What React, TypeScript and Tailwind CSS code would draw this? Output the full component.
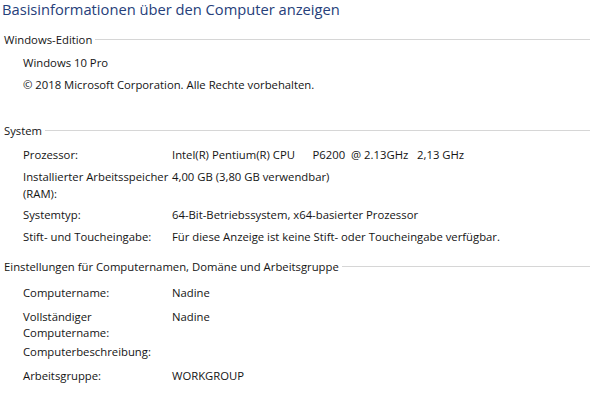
import React from "react";

const font = { fontFamily: '"Open Sans", "Noto Sans", sans-serif' };

function Section({ title, children }: { title: string; children: React.ReactNode }) {
  return (
    <div>
      <div className="flex items-center gap-[3px] pl-[4px]">
        <span className="whitespace-nowrap">{title}</span>
        <div className="h-px flex-1 bg-[#d6d6d6]" />
      </div>
      {children}
    </div>
  );
}

function Row({
  label,
  value,
  className = "",
}: {
  label: React.ReactNode;
  value?: React.ReactNode;
  className?: string;
}) {
  return (
    <div className={`grid grid-cols-[149px_1fr] pl-[23px] ${className}`}>
      <div>{label}</div>
      <div className="whitespace-pre">{value}</div>
    </div>
  );
}

export default function App() {
  return (
    <div
      className="h-[394px] w-[590px] overflow-hidden bg-white text-[11.3px] leading-[17px] text-[#141414]"
      style={font}
    >
      <h1 className="pl-[2px] text-[14.7px] leading-[18px] text-[#26407a]">
        Basisinformationen über den Computer anzeigen
      </h1>

      <div className="mt-[13px]">
        <Section title="Windows-Edition">
          <div className="mt-[6px] flex flex-col gap-[5px] pl-[23px]">
            <div>Windows 10 Pro</div>
            <div>© 2018 Microsoft Corporation. Alle Rechte vorbehalten.</div>
          </div>
        </Section>
      </div>

      <div className="mt-[29px]">
        <Section title="System">
          <div className="mt-[7px] flex flex-col">
            <Row
              label="Prozessor:"
              value={"Intel(R) Pentium(R) CPU      P6200  @ 2.13GHz   2,13 GHz"}
            />
            <Row
              className="mt-[5px]"
              label={
                <>
                  Installierter Arbeitsspeicher
                  <br />
                  (RAM):
                </>
              }
              value="4,00 GB (3,80 GB verwendbar)"
            />
            <Row
              className="mt-[4px]"
              label="Systemtyp:"
              value="64-Bit-Betriebssystem, x64-basierter Prozessor"
            />
            <Row
              className="mt-[5px]"
              label="Stift- und Toucheingabe:"
              value="Für diese Anzeige ist keine Stift- oder Toucheingabe verfügbar."
            />
          </div>
        </Section>
      </div>

      <div className="mt-[13px]">
        <Section title="Einstellungen für Computernamen, Domäne und Arbeitsgruppe">
          <div className="mt-[9px] flex flex-col">
            <Row label="Computername:" value="Nadine" />
            <Row
              className="mt-[8px] leading-[16px]"
              label={
                <>
                  Vollständiger
                  <br />
                  Computername:
                </>
              }
              value="Nadine"
            />
            <Row className="mt-[2px]" label="Computerbeschreibung:" />
            <Row className="mt-[7px]" label="Arbeitsgruppe:" value="WORKGROUP" />
          </div>
        </Section>
      </div>
    </div>
  );
}
